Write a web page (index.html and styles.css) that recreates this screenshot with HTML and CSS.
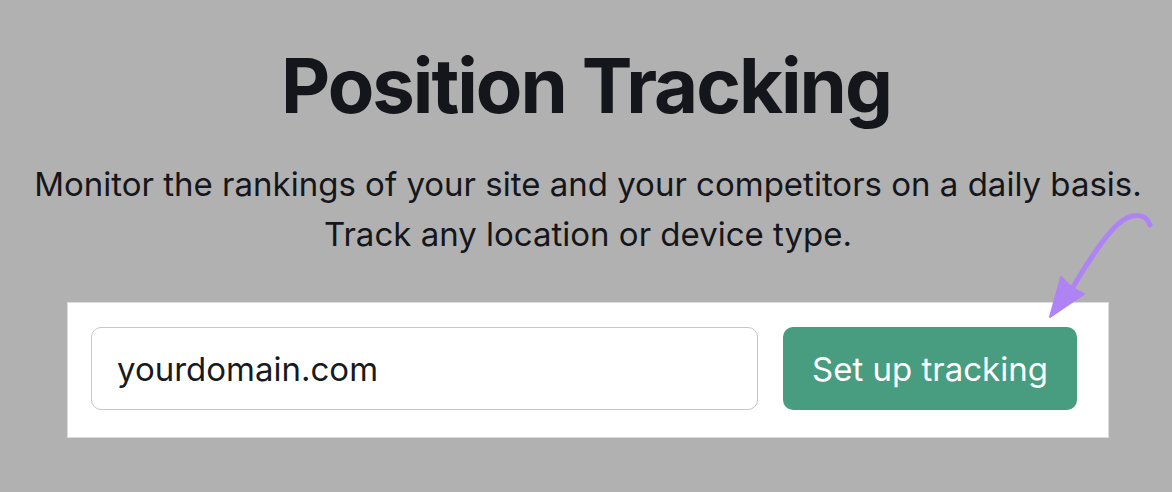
FILE: index.html
```html
<!DOCTYPE html>
<html>
<head>
<meta charset="utf-8">
<link rel="stylesheet" href="styles.css">
</head>
<body>
<div class="page">
  <h1 class="title">Position Tracking</h1>
  <p class="subtitle">Monitor the rankings of your site and your competitors on a daily basis.<br>Track any location or device type.</p>
  <div class="panel">
    <div class="field">yourdomain.com</div>
    <button class="btn">Set up tracking</button>
  </div>
  <svg class="arrow" width="1172" height="492" viewBox="0 0 1172 492">
    <path d="M1150 225 C1146 213 1132 212 1118 224 C1103 238 1088 262 1073 287" fill="none" stroke="#b083f5" stroke-width="5" stroke-linecap="round"/>
    <path d="M1050 317 L1061 277 Q1070 288 1084 294 Z" fill="#b083f5" stroke="#b083f5" stroke-width="2" stroke-linejoin="round"/>
  </svg>
</div>
</body>
</html>
```
FILE: styles.css
```css
html, body {
  margin: 0;
  padding: 0;
  background: #b1b1b1;
}
.page {
  position: relative;
  width: 1172px;
  height: 492px;
  overflow: hidden;
  font-family: Inter, "Noto Sans", sans-serif;
  color: #15161b;
}
.title {
  margin: 0;
  padding-top: 40px;
  text-align: center;
  font-size: 76px;
  font-weight: 700;
  line-height: 90px;
  letter-spacing: -2px;
}
.subtitle {
  margin: 29px 0 0;
  padding-left: 4px;
  text-align: center;
  font-size: 33px;
  line-height: 50px;
  font-weight: 400;
}
.panel {
  box-sizing: border-box;
  margin: 43px 0 0 67px;
  width: 1042px;
  height: 136px;
  background: #fff;
  border: 1px solid #dcdcdc;
  display: flex;
  align-items: flex-start;
  gap: 25px;
  padding: 24px 31px 0 23px;
}
.field {
  box-sizing: border-box;
  width: 667px;
  height: 83px;
  border: 1.5px solid #c5c7d0;
  border-radius: 10px;
  display: flex;
  align-items: center;
  padding-left: 25px;
  font-size: 33px;
  color: #171a20;
}
.btn {
  box-sizing: border-box;
  width: 294px;
  height: 83px;
  border: none;
  border-radius: 10px;
  background: #489c80;
  color: #fff;
  font-family: Inter, "Noto Sans", sans-serif;
  font-size: 33px;
  font-weight: 400;
}
.arrow {
  position: absolute;
  left: 0;
  top: 0;
  pointer-events: none;
}
```
